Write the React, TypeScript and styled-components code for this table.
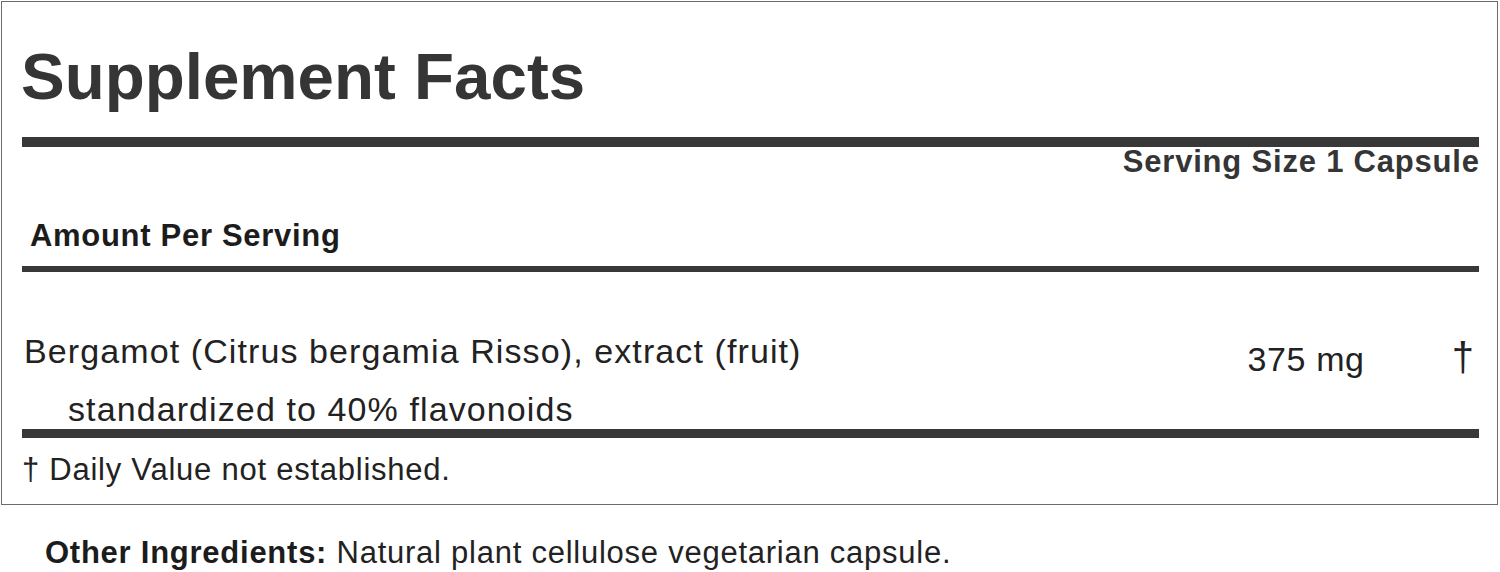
import React from 'react';
import styled, { createGlobalStyle } from 'styled-components';

const GlobalStyle = createGlobalStyle`
  html, body {
    margin: 0;
    padding: 0;
    background: #ffffff;
  }
  body {
    font-family: 'Liberation Sans', Arial, Helvetica, sans-serif;
    color: #222222;
  }
`;

const colors = {
  ink: '#222222',
  heading: '#353535',
  dark: '#1c1c1c',
  bar: '#383838',
  frame: '#6b6b6b',
};

type Ingredient = {
  name: string;
  detail: string;
  amount: string;
  dailyValue: string;
};

const ingredients: Ingredient[] = [
  {
    name: 'Bergamot (Citrus bergamia Risso), extract (fruit)',
    detail: 'standardized to 40% flavonoids',
    amount: '375 mg',
    dailyValue: '†',
  },
];

export default function App() {
  return (
    <>
      <GlobalStyle />
      <Page>
        <Panel>
          <Title>Supplement Facts</Title>
          <Rule thickness={10} gap={20} />
          <ServingSize>Serving Size 1 Capsule</ServingSize>
          <ColumnHeading>Amount Per Serving</ColumnHeading>
          <Rule thickness={6} gap={15} />
          {ingredients.map(item => (
            <IngredientRow key={item.name}>
              <NameCell>
                <NameLine>{item.name}</NameLine>
                <DetailLine>{item.detail}</DetailLine>
              </NameCell>
              <AmountCell>{item.amount}</AmountCell>
              <DailyCell>{item.dailyValue}</DailyCell>
            </IngredientRow>
          ))}
          <Rule thickness={9} gap={0} />
          <Footnote>† Daily Value not established.</Footnote>
        </Panel>
        <OtherIngredients>
          <strong>Other Ingredients:</strong> Natural plant cellulose vegetarian capsule.
        </OtherIngredients>
      </Page>
    </>
  );
}

const Page = styled.div`
  width: 1500px;
  height: 572px;
  box-sizing: border-box;
  padding: 1px 0 0 1px;
  overflow: hidden;
`;

const Panel = styled.section`
  box-sizing: border-box;
  width: 1497px;
  border: 1px solid ${colors.frame};
  padding: 35px 18px 17px 20px;
  display: flex;
  flex-direction: column;
`;

const Title = styled.h1`
  margin: 0 0 0 -1px;
  font-size: 65.5px;
  line-height: 80px;
  font-weight: 700;
  color: ${colors.heading};
`;

const Rule = styled.hr<{ thickness: number; gap: number }>`
  margin: ${props => `${props.gap}px`} 0 0 0;
  height: ${props => `${props.thickness}px`};
  border: none;
  background: ${colors.bar};
`;

const ServingSize = styled.div`
  font-size: 31px;
  line-height: 30px;
  font-weight: 700;
  letter-spacing: 0.8px;
  margin-right: -0.8px;
  text-align: right;
  color: ${colors.heading};
`;

const ColumnHeading = styled.div`
  margin: 44px 0 0 8px;
  font-size: 31px;
  line-height: 30px;
  font-weight: 700;
  letter-spacing: 0.7px;
  color: ${colors.dark};
`;

const IngredientRow = styled.div`
  display: grid;
  grid-template-columns: 1fr auto 115px;
  align-items: start;
  margin-top: 59px;
  color: ${colors.ink};
`;

const NameCell = styled.div`
  display: flex;
  flex-direction: column;
  gap: 18px;
  padding-left: 2px;
`;

const NameLine = styled.div`
  font-size: 34px;
  line-height: 40px;
  letter-spacing: 1.1px;
`;

const DetailLine = styled(NameLine)`
  padding-left: 44px;
`;

const AmountCell = styled.div`
  padding-top: 8px;
  font-size: 34px;
  line-height: 40px;
  letter-spacing: 0.6px;
  margin-right: -0.6px;
`;

const DailyCell = styled.div`
  padding: 6px 5px 0 0;
  font-size: 40px;
  line-height: 40px;
  text-align: right;
`;

const Footnote = styled.div`
  margin-top: 15px;
  font-size: 31px;
  line-height: 34px;
  letter-spacing: 0.75px;
  color: ${colors.ink};
`;

const OtherIngredients = styled.p`
  margin: 31px 0 0 44px;
  font-size: 31px;
  line-height: 34px;
  letter-spacing: 0.75px;
  color: ${colors.ink};

  strong {
    font-weight: 700;
    color: ${colors.dark};
  }
`;
